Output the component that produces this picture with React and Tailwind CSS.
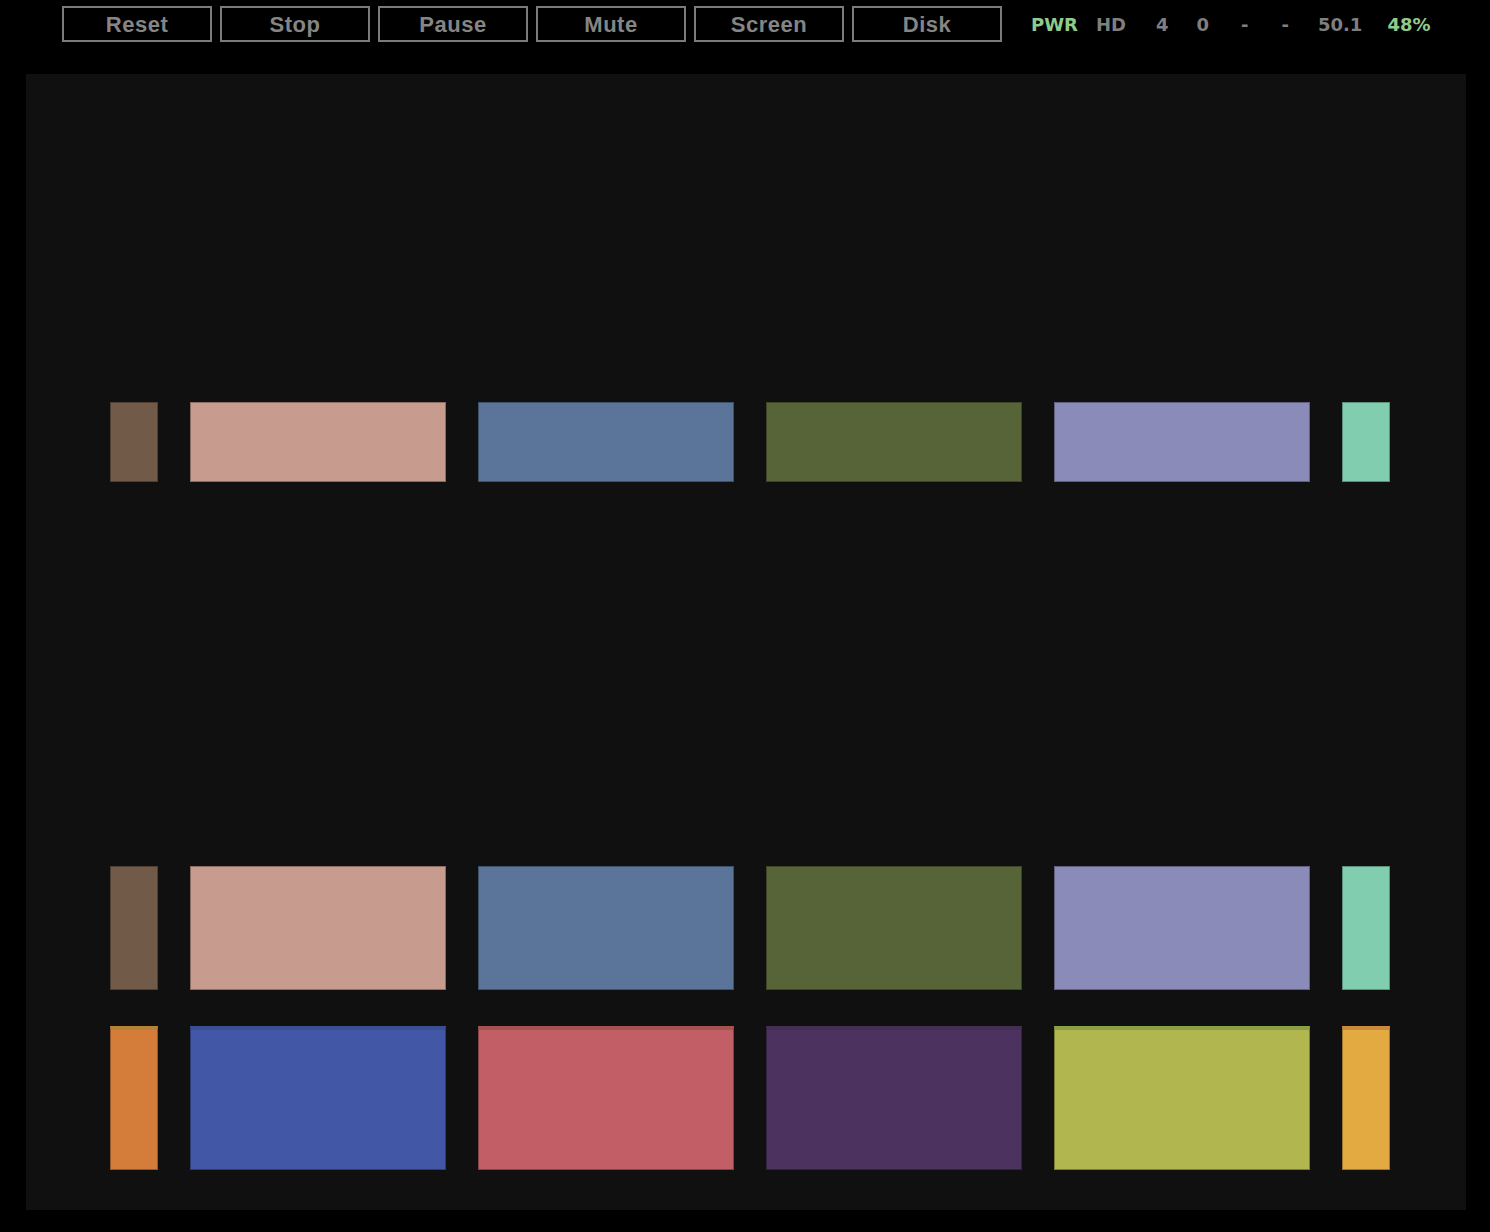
const buttons = ['Reset', 'Stop', 'Pause', 'Mute', 'Screen', 'Disk'];

const status = [
  { t: 'PWR', c: 'text-[#8fcb8a]', ml: 'ml-[29px]' },
  { t: 'HD', c: 'text-[#7f7f7f]', ml: 'ml-[18px]' },
  { t: '4', c: 'text-[#7f7f7f]', ml: 'ml-[30px]' },
  { t: '0', c: 'text-[#7f7f7f]', ml: 'ml-[28px]' },
  { t: '-', c: 'text-[#7f7f7f]', ml: 'ml-[32px]' },
  { t: '-', c: 'text-[#7f7f7f]', ml: 'ml-[33px]' },
  { t: '50.1', c: 'text-[#7f7f7f]', ml: 'ml-[29px]' },
  { t: '48%', c: 'text-[#8fcb8a]', ml: 'ml-[25px]' },
];

const topRow = [
  { w: 'w-[48px]', bg: 'bg-[#725a48]' },
  { w: 'w-[256px]', bg: 'bg-[#c89b8f]' },
  { w: 'w-[256px]', bg: 'bg-[#5a7599]' },
  { w: 'w-[256px]', bg: 'bg-[#566437]' },
  { w: 'w-[256px]', bg: 'bg-[#8a8bb8]' },
  { w: 'w-[48px]', bg: 'bg-[#80cdb0]' },
];

const bottomRow = [
  { w: 'w-[48px]', bg: 'bg-[#d47c3a]', top: 'border-t-[#b58236]' },
  { w: 'w-[256px]', bg: 'bg-[#4258a6]', top: 'border-t-[#394f93]' },
  { w: 'w-[256px]', bg: 'bg-[#c25e65]', top: 'border-t-[#a6524f]' },
  { w: 'w-[256px]', bg: 'bg-[#4c325e]', top: 'border-t-[#442f52]' },
  { w: 'w-[256px]', bg: 'bg-[#b1b64e]', top: 'border-t-[#8ba046]' },
  { w: 'w-[48px]', bg: 'bg-[#e4aa42]', top: 'border-t-[#c98a3c]' },
];

function Block({ w, h, bg }) {
  return <div className={`${w} ${h} ${bg} border border-black/30`} />;
}

export default function App() {
  return (
    <div className="min-h-[1232px] bg-black pt-[6px] pb-[22px]">
      {/* Toolbar */}
      <div className="flex items-center pl-[62px] h-[36px]">
        <div className="flex gap-[8px]">
          {buttons.map((b) => (
            <button
              key={b}
              className="w-[150px] h-[36px] pt-[2px] border-2 border-[#7b7b7b] bg-black text-[#858585] text-[22px] tracking-[0.5px] font-bold font-['Liberation_Sans',Arial,sans-serif] leading-none"
            >
              {b}
            </button>
          ))}
        </div>
        <div className="flex items-center font-['DejaVu_Sans',Verdana,sans-serif] font-bold text-[18px]">
          {status.map((s, i) => (
            <span key={i} className={`${s.ml} ${s.c}`}>
              {s.t}
            </span>
          ))}
        </div>
      </div>

      {/* Screen */}
      <div className="mt-[32px] ml-[26px] w-[1440px] h-[1136px] bg-[#101010] pl-[84px] pt-[328px]">
        <div className="flex gap-[32px]">
          {topRow.map((r, i) => (
            <Block key={i} w={r.w} h="h-[80px]" bg={r.bg} />
          ))}
        </div>
        <div className="flex gap-[32px] mt-[384px]">
          {topRow.map((r, i) => (
            <Block key={i} w={r.w} h="h-[124px]" bg={r.bg} />
          ))}
        </div>
        <div className="flex gap-[32px] mt-[36px]">
          {bottomRow.map((r, i) => (
            <div
              key={i}
              className={`${r.w} h-[144px] ${r.bg} border border-black/30 border-t-4 ${r.top}`}
            />
          ))}
        </div>
      </div>
    </div>
  );
}
